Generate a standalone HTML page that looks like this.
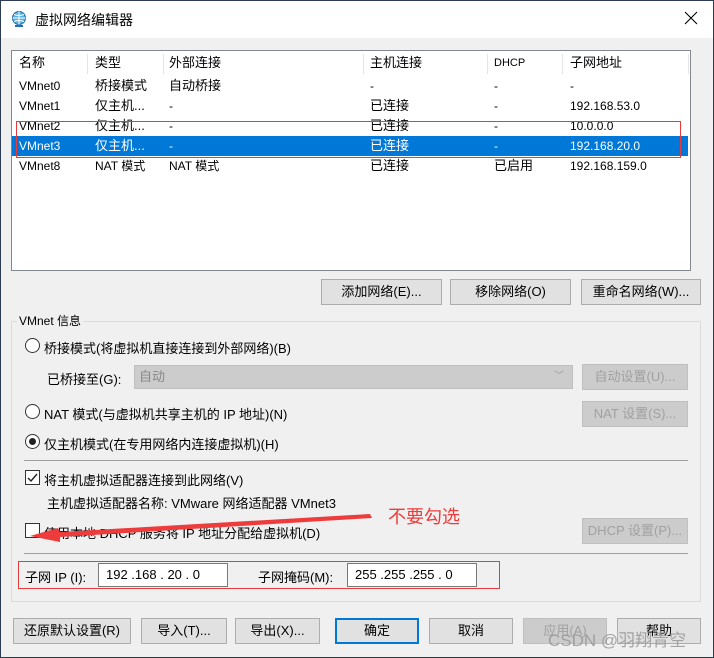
<!DOCTYPE html>
<html><head><meta charset="utf-8"><style>
*{box-sizing:border-box;margin:0;padding:0}
body{width:714px;height:658px;overflow:hidden;background:#f0f0f0;font-family:"Liberation Sans","Noto Sans CJK SC",sans-serif;font-size:13px;color:#000;position:relative}
.a{position:absolute;white-space:nowrap}
.btn{position:absolute;height:26px;background:#e1e1e1;border:1px solid #adadad;text-align:center;line-height:24px;font-size:13px}
.dis{color:#a0a0a0;background:#cccccc;border-color:#bfbfbf}
.row{position:absolute;left:12px;width:676px;height:20px;line-height:20px}
.row span{position:absolute}
.radio{position:absolute;width:15px;height:15px;border:1px solid #333;border-radius:50%;background:#fff}
.cb{position:absolute;width:15px;height:15px;border:1px solid #333;background:#fff}
</style></head><body>
<div class="a" style="left:0;top:0;width:714px;height:38px;background:#fff"></div>
<svg class="a" style="left:10px;top:10px" width="18" height="18" viewBox="0 0 18 18"><circle cx="9" cy="8" r="6.5" fill="#5ab0e0" stroke="#1f6fa8"/><path d="M2.5 8h13M9 1.5v13M4 4.5q5 2 10 0M4 11.5q5-2 10 0" stroke="#fff" fill="none"/><rect x="5" y="15" width="8" height="2" fill="#1f6fa8"/></svg>
<div class="a" style="left:35px;top:10px;font-size:14px">虚拟网络编辑器</div>
<svg class="a" style="left:684px;top:11px" width="14" height="14"><path d="M1 1L13 13M13 1L1 13" stroke="#000" stroke-width="1.1"/></svg>

<div class="a" style="left:11px;top:50px;width:680px;height:221px;background:#fff;border:1px solid #828790"></div>
<div class="row" style="top:53px;height:22px;line-height:20px">
<span style="left:7px">名称</span><span style="left:83px">类型</span><span style="left:157px">外部连接</span><span style="left:358px">主机连接</span><span style="left:482px;font-size:11px">DHCP</span><span style="left:558px">子网地址</span></div>
<div class="a" style="left:87px;top:54px;width:1px;height:20px;background:#e5e5e5"></div>
<div class="a" style="left:163px;top:54px;width:1px;height:20px;background:#e5e5e5"></div>
<div class="a" style="left:363px;top:54px;width:1px;height:20px;background:#e5e5e5"></div>
<div class="a" style="left:487px;top:54px;width:1px;height:20px;background:#e5e5e5"></div>
<div class="a" style="left:562px;top:54px;width:1px;height:20px;background:#e5e5e5"></div>
<div class="a" style="left:688px;top:54px;width:1px;height:20px;background:#e5e5e5"></div>
<div class="row" style="top:76px;font-size:12px"><span style="left:7px">VMnet0</span><span style="left:83px;font-size:13px">桥接模式</span><span style="left:157px;font-size:13px">自动桥接</span><span style="left:358px">-</span><span style="left:482px">-</span><span style="left:558px">-</span></div>
<div class="row" style="top:96px;font-size:12px"><span style="left:7px">VMnet1</span><span style="left:83px;font-size:13px">仅主机...</span><span style="left:157px">-</span><span style="left:358px;font-size:13px">已连接</span><span style="left:482px">-</span><span style="left:558px">192.168.53.0</span></div>
<div class="row" style="top:116px;font-size:12px"><span style="left:7px">VMnet2</span><span style="left:83px;font-size:13px">仅主机...</span><span style="left:157px">-</span><span style="left:358px;font-size:13px">已连接</span><span style="left:482px">-</span><span style="left:558px">10.0.0.0</span></div>
<div class="row" style="top:136px;font-size:12px;background:#0078d7;color:#fff"><span style="left:7px">VMnet3</span><span style="left:83px;font-size:13px">仅主机...</span><span style="left:157px">-</span><span style="left:358px;font-size:13px">已连接</span><span style="left:482px">-</span><span style="left:558px">192.168.20.0</span></div>
<div class="row" style="top:156px;font-size:12px"><span style="left:7px">VMnet8</span><span style="left:83px">NAT 模式</span><span style="left:157px">NAT 模式</span><span style="left:358px;font-size:13px">已连接</span><span style="left:482px;font-size:13px">已启用</span><span style="left:558px">192.168.159.0</span></div>
<div class="a" style="left:16px;top:121px;width:665px;height:37px;border:1px solid #e83a3a"></div>

<div class="btn" style="left:321px;top:279px;width:121px">添加网络(E)...</div>
<div class="btn" style="left:450px;top:279px;width:121px">移除网络(O)</div>
<div class="btn" style="left:581px;top:279px;width:120px">重命名网络(W)...</div>

<div class="a" style="left:11px;top:321px;width:690px;height:281px;border:1px solid #dcdcdc"></div>
<div class="a" style="left:17px;top:312px;background:#f0f0f0;padding:0 2px;font-size:12px">VMnet 信息</div>
<div class="radio" style="left:25px;top:338px"></div>
<div class="a" style="left:44px;top:338px">桥接模式(将虚拟机直接连接到外部网络)(B)</div>
<div class="a" style="left:47px;top:369px">已桥接至(G):</div>
<div class="a" style="left:134px;top:365px;width:439px;height:24px;background:#cccccc;border:1px solid #bfbfbf;color:#888;padding-left:4px;line-height:22px">自动<span style="position:absolute;right:8px;color:#999;font-size:10px">﹀</span></div>
<div class="btn dis" style="left:582px;top:364px;width:106px">自动设置(U)...</div>
<div class="radio" style="left:25px;top:404px"></div>
<div class="a" style="left:44px;top:404px">NAT 模式(与虚拟机共享主机的 IP 地址)(N)</div>
<div class="btn dis" style="left:582px;top:401px;width:106px">NAT 设置(S)...</div>
<div class="radio" style="left:25px;top:434px"><div style="position:absolute;left:3px;top:3px;width:7px;height:7px;border-radius:50%;background:#222"></div></div>
<div class="a" style="left:44px;top:434px">仅主机模式(在专用网络内连接虚拟机)(H)</div>
<div class="a" style="left:24px;top:460px;width:664px;height:1px;background:#a0a0a0"></div>
<div class="cb" style="left:25px;top:470px"><svg width="13" height="13" style="position:absolute;left:0;top:0"><path d="M2 7l3 3 6-7" stroke="#222" stroke-width="1.4" fill="none"/></svg></div>
<div class="a" style="left:44px;top:470px">将主机虚拟适配器连接到此网络(V)</div>
<div class="a" style="left:47px;top:493px">主机虚拟适配器名称: VMware 网络适配器 VMnet3</div>
<div class="cb" style="left:25px;top:523px"></div>
<div class="a" style="left:44px;top:523px">使用本地 DHCP 服务将 IP 地址分配给虚拟机(D)</div>
<div class="btn dis" style="left:582px;top:518px;width:106px">DHCP 设置(P)...</div>
<div class="a" style="left:24px;top:553px;width:664px;height:1px;background:#a0a0a0"></div>
<div class="a" style="left:18px;top:561px;width:482px;height:28px;border:1px solid #e83a3a"></div>
<div class="a" style="left:25px;top:567px">子网 IP (I):</div>
<div class="a" style="left:98px;top:563px;width:130px;height:24px;background:#fff;border:1px solid #7a7a7a;padding-left:7px;line-height:22px">192 .168 . 20 . 0</div>
<div class="a" style="left:258px;top:567px">子网掩码(M):</div>
<div class="a" style="left:347px;top:563px;width:130px;height:24px;background:#fff;border:1px solid #7a7a7a;padding-left:7px;line-height:22px">255 .255 .255 . 0</div>

<svg class="a" style="left:0;top:500px" width="400" height="50"><path d="M370 14 L60 32 L58 28 L30 36 L60 42 L60 37 L372 18Z" fill="#ee3b3b"/></svg>
<div class="a" style="left:388px;top:503px;color:#ee3b3b;font-size:18px">不要勾选</div>

<div class="btn" style="left:13px;top:618px;width:118px">还原默认设置(R)</div>
<div class="btn" style="left:141px;top:618px;width:86px">导入(T)...</div>
<div class="btn" style="left:235px;top:618px;width:85px">导出(X)...</div>
<div class="btn" style="left:335px;top:618px;width:84px;border:2px solid #0078d7;line-height:22px">确定</div>
<div class="btn" style="left:429px;top:618px;width:84px">取消</div>
<div class="btn dis" style="left:523px;top:618px;width:84px">应用(A)</div>
<div class="btn" style="left:617px;top:618px;width:84px">帮助</div>
<div class="a" style="left:548px;top:626px;font-size:17px;color:rgba(150,150,150,0.85)">CSDN @羽翔青空</div>
<div class="a" style="left:0;top:0;width:714px;height:658px;border:1px solid #2b3a55;pointer-events:none"></div>
</body></html>
